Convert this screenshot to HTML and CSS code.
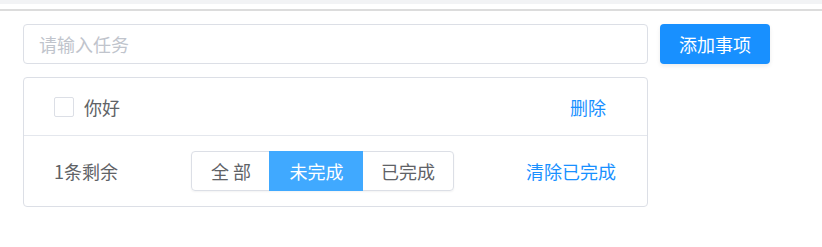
FILE: index.html
```html
<!DOCTYPE html>
<html lang="zh-CN">
<head>
    <meta charset="UTF-8">
    <title>待办事项</title>
    <link rel="stylesheet" href="styles.css">
</head>
<body>
    <div class="topbar"></div>
    <div class="topline"></div>

    <div class="container">
        <div class="add-row">
            <input class="task-input" type="text" placeholder="请输入任务">
            <button class="add-btn">添加事项</button>
        </div>

        <div class="card">
            <div class="todo-item">
                <span class="checkbox"></span>
                <span class="todo-text">你好</span>
                <a class="link delete">删除</a>
            </div>
            <div class="footer">
                <span class="count">1条剩余</span>
                <div class="filter-group">
                    <span class="filter filter-all">全 部</span>
                    <span class="filter active">未完成</span>
                    <span class="filter">已完成</span>
                </div>
                <a class="link clear">清除已完成</a>
            </div>
        </div>
    </div>
</body>
</html>
```

FILE: styles.css
```css
body {
    margin: 0;
    font-family: "Noto Sans CJK SC", "Microsoft YaHei", sans-serif;
    font-size: 18px;
    color: #606266;
    background: #fff;
}

.topbar {
    height: 4px;
    background: #f2f3f5;
}

.topline {
    height: 2px;
    margin-top: 5px;
    background: #dcdcdc;
}

.container {
    padding: 13px 0 0 23px;
}

.add-row {
    display: flex;
    gap: 12px;
}

.task-input {
    box-sizing: border-box;
    width: 625px;
    height: 40px;
    padding: 0 15px;
    border: 1px solid #dcdfe6;
    border-radius: 4px;
    font-family: inherit;
    font-size: 18px;
    color: #606266;
    outline: none;
}

.task-input::placeholder {
    color: #c0c4cc;
}

.add-btn {
    box-sizing: border-box;
    width: 110px;
    height: 40px;
    padding: 0;
    border: none;
    border-radius: 4px;
    background: #1890ff;
    color: #fff;
    font-family: inherit;
    font-size: 18px;
    box-shadow: 0 2px 4px rgba(0, 0, 0, 0.08);
}

.card {
    box-sizing: border-box;
    width: 625px;
    margin-top: 13px;
    border: 1px solid #dcdfe6;
    border-radius: 4px;
}

.todo-item {
    display: flex;
    align-items: center;
    height: 57px;
    padding: 0 41px 0 30px;
    border-bottom: 1px solid #e4e7ed;
}

.checkbox {
    box-sizing: border-box;
    width: 20px;
    height: 20px;
    margin-right: 10px;
    border: 1px solid #dcdfe6;
    border-radius: 2px;
}

.link {
    color: #1890ff;
    margin-left: auto;
    cursor: pointer;
}

.footer {
    display: flex;
    align-items: center;
    height: 70px;
    padding: 0 31px 0 30px;
}

.count {
    width: 137px;
}

.filter-group {
    display: flex;
    height: 40px;
    border: 1px solid #dcdfe6;
    border-radius: 4px;
    box-sizing: border-box;
    box-shadow: 0 1px 2px rgba(0, 0, 0, 0.05);
}

.filter {
    display: flex;
    align-items: center;
    padding: 0 18px;
}

.filter-all {
    padding: 0 18px 0 19px;
}

.filter + .filter {
    border-left: 1px solid #dcdfe6;
}

.filter.active {
    padding: 0 19.5px;
    background: #40a9ff;
    color: #fff;
    border-left-color: #40a9ff;
    margin-top: -1px;
    margin-bottom: -1px;
}

.filter.active + .filter {
    border-left: none;
}
```
